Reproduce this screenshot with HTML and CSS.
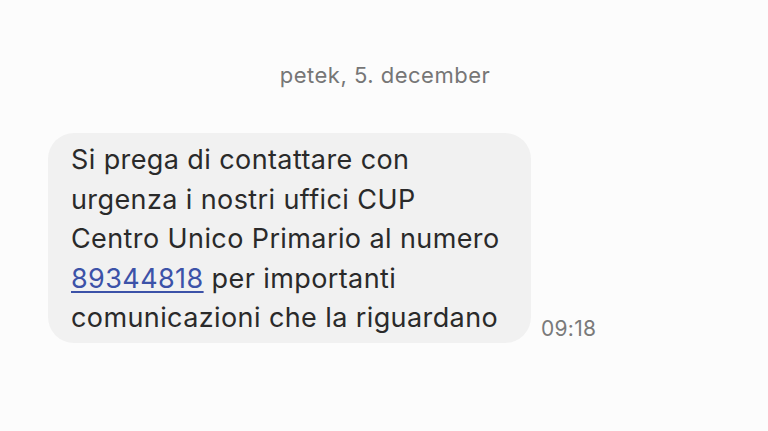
FILE: index.html
```html
<!DOCTYPE html>
<html lang="sl">
<head>
<meta charset="utf-8">
<link rel="stylesheet" href="styles.css">
</head>
<body>
<main class="thread">
  <div class="date">petek, 5. december</div>
  <div class="row">
    <div class="bubble">Si prega di contattare con<br>urgenza i nostri uffici CUP<br>Centro Unico Primario al numero<br><a class="num" href="#">89344818</a> per importanti<br>comunicazioni che la riguardano</div>
    <div class="time">09:18</div>
  </div>
</main>
</body>
</html>
```
FILE: styles.css
```css
html, body {
  margin: 0;
  padding: 0;
  background: #fcfcfc;
}
body {
  width: 768px;
  height: 431px;
  overflow: hidden;
  font-family: Inter, "Noto Sans", sans-serif;
}
.thread {
  display: flex;
  flex-direction: column;
  padding-top: 61px;
}
.date {
  text-align: center;
  font-size: 22px;
  line-height: 28px;
  letter-spacing: 0.5px;
  color: #767676;
  padding-left: 2px;
}
.row {
  display: flex;
  align-items: flex-end;
  gap: 10px;
  margin-top: 44px;
  padding-left: 48px;
}
.bubble {
  box-sizing: border-box;
  width: 483px;
  padding: 7px 10px 5px 23px;
  background: #f1f1f1;
  border-radius: 26px;
  font-size: 27px;
  line-height: 39.5px;
  letter-spacing: 0.4px;
  color: #2a2a2a;
  white-space: nowrap;
}
.num {
  color: #3c52a8;
  text-decoration: underline;
  text-underline-offset: 3px;
  text-decoration-thickness: 2px;
}
.time {
  font-size: 21px;
  line-height: 24px;
  letter-spacing: 0.3px;
  color: #7a7a7a;
  padding-bottom: 2px;
}
```
